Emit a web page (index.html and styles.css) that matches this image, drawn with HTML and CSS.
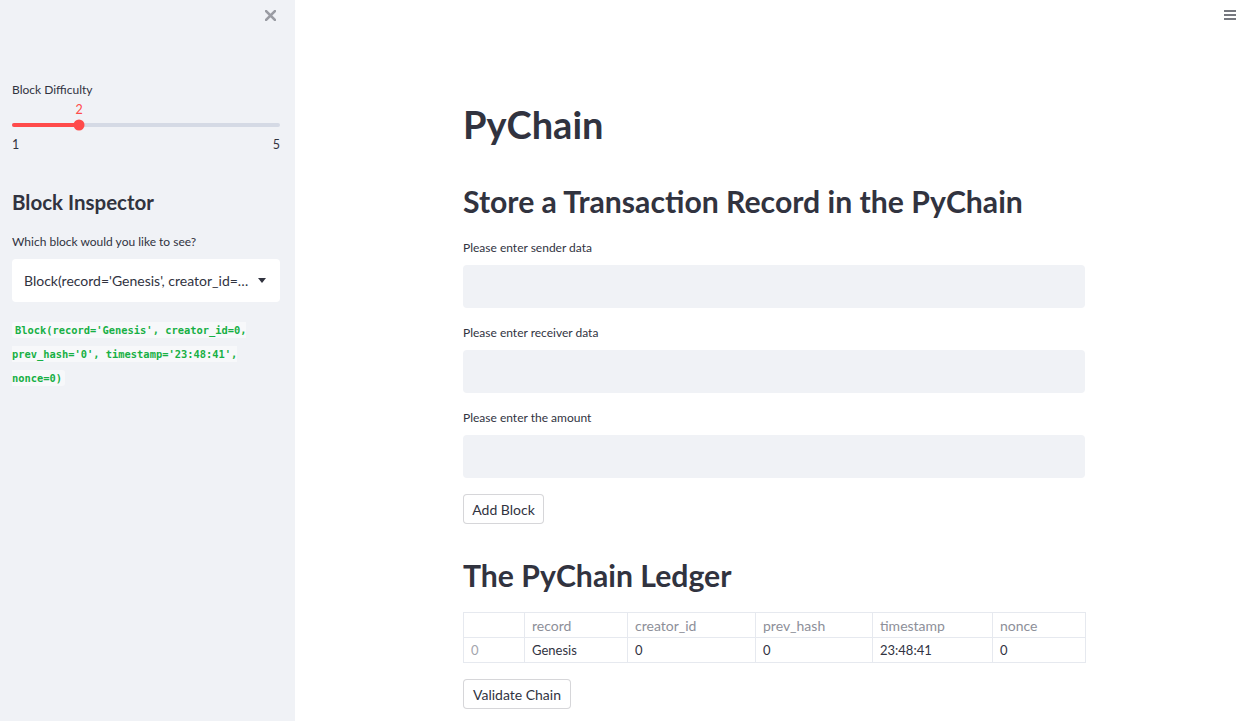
FILE: index.html
```html
<!DOCTYPE html>
<html lang="en">
<head>
<meta charset="utf-8">
<title>PyChain</title>
<link rel="stylesheet" href="styles.css">
</head>
<body>
<div class="app">
  <aside class="sidebar">
    <div class="sb-top">
      <svg class="close-icon" viewBox="0 0 10 10" width="11" height="11"><path d="M1 1 L9 9 M9 1 L1 9" stroke="#9a9ca3" stroke-width="2.4" stroke-linecap="round"/></svg>
    </div>
    <div class="widget-label slider-label">Block Difficulty</div>
    <div class="slider">
      <div class="slider-track">
        <div class="slider-fill" style="width:25%"></div>
        <div class="slider-thumb" style="left:25%"><span class="slider-value">2</span></div>
      </div>
    </div>
    <div class="slider-minmax"><span>1</span><span>5</span></div>
    <h2 class="sb-heading">Block Inspector</h2>
    <div class="widget-label">Which block would you like to see?</div>
    <div class="select">
      <span class="select-text">Block(record='Genesis', creator_id=…</span>
      <svg class="caret" viewBox="0 0 8 5" width="8" height="5"><path d="M0 0 L8 0 L4 5 Z" fill="#31333f"/></svg>
    </div>
    <div class="code-out"><code>Block(record='Genesis', creator_id=0, prev_hash='0', timestamp='23:48:41', nonce=0)</code></div>
  </aside>
  <main class="main">
    <header class="topbar">
      <svg class="menu-icon" viewBox="0 0 12 10" width="12" height="10"><path d="M0 1 H12 M0 5 H12 M0 9 H12" stroke="#4a4c55" stroke-width="1.5"/></svg>
    </header>
    <div class="block-container">
      <h1 class="title">PyChain</h1>
      <h2 class="heading first-heading">Store a Transaction Record in the PyChain</h2>
      <div class="widget-label field-label first-label">Please enter sender data</div>
      <div class="text-input"></div>
      <div class="widget-label field-label">Please enter receiver data</div>
      <div class="text-input"></div>
      <div class="widget-label field-label">Please enter the amount</div>
      <div class="text-input"></div>
      <button class="btn btn-add">Add Block</button>
      <h2 class="heading ledger-heading">The PyChain Ledger</h2>
      <table class="ledger">
        <colgroup>
          <col class="c-idx"><col class="c-record"><col class="c-creator"><col class="c-prev"><col class="c-ts"><col class="c-nonce">
        </colgroup>
        <thead>
          <tr><th></th><th>record</th><th>creator_id</th><th>prev_hash</th><th>timestamp</th><th>nonce</th></tr>
        </thead>
        <tbody>
          <tr><td class="idx">0</td><td>Genesis</td><td>0</td><td>0</td><td>23:48:41</td><td>0</td></tr>
        </tbody>
      </table>
      <button class="btn btn-validate">Validate Chain</button>
    </div>
  </main>
</div>
</body>
</html>
```

FILE: styles.css
```css
* { box-sizing: border-box; }
html, body { margin: 0; padding: 0; }
body {
  font-family: Lato, "Liberation Sans", sans-serif;
  color: #31333f;
  background: #ffffff;
}
.app {
  display: flex;
  height: 100vh;
  overflow: hidden;
}

/* Sidebar */
.sidebar {
  flex: 0 0 295px;
  width: 295px;
  background: #f0f2f6;
  padding: 0 15px 0 12px;
}
.sb-top {
  height: 30px;
  display: flex;
  justify-content: flex-end;
  align-items: center;
  padding-right: 4px;
}
.widget-label {
  font-size: 12px;
  line-height: 16px;
  color: #31333f;
}
.slider-label { margin-top: 52px; }
.slider {
  padding-top: 25px;
  padding-bottom: 10px;
}
.slider-track {
  position: relative;
  height: 4px;
  border-radius: 2px;
  background: #d5dae5;
}
.slider-fill {
  height: 4px;
  border-radius: 2px;
  background: #ff4b4b;
}
.slider-thumb {
  position: absolute;
  top: 50%;
  width: 11px;
  height: 11px;
  border-radius: 50%;
  background: #ff4b4b;
  transform: translate(-50%, -50%);
}
.slider-value {
  position: absolute;
  left: 50%;
  bottom: 100%;
  margin-bottom: 3px;
  transform: translateX(-50%);
  font-size: 12.5px;
  line-height: 14px;
  color: #ff4b4b;
}
.slider-minmax {
  display: flex;
  justify-content: space-between;
  font-size: 12.5px;
  line-height: 16px;
}
.sb-heading {
  margin: 35px 0 0;
  font-size: 20.5px;
  line-height: 28px;
  font-weight: 700;
}
.sb-heading + .widget-label { margin-top: 18px; }
.select {
  margin-top: 9px;
  height: 43px;
  background: #ffffff;
  border-radius: 4px;
  display: flex;
  align-items: center;
  justify-content: space-between;
  padding: 0 14px 0 12px;
}
.select-text {
  white-space: nowrap;
  font-size: 14px;
}
.caret { flex: none; }
.code-out {
  margin-top: 15px;
  line-height: 22px;
}
.code-out code {
  font-family: "DejaVu Sans Mono", "Liberation Mono", monospace;
  font-size: 10.4px;
  font-weight: 600;
  color: #17b045;
  background: #f7f8fa;
  padding: 2px 3px;
  border-radius: 3px;
}

/* Main */
.main {
  flex: 1;
  padding-left: 5px;
  display: flex;
  flex-direction: column;
}
.topbar {
  height: 30px;
  display: flex;
  justify-content: flex-end;
  align-items: flex-start;
  padding: 10px 12px 0 0;
}
.block-container {
  width: 622px;
  margin: 0 auto;
  padding-top: 70px;
}
.title {
  margin: 0;
  font-size: 38px;
  line-height: 48px;
  font-weight: 700;
}
.heading {
  margin: 0;
  font-size: 30.2px;
  line-height: 40px;
  font-weight: 700;
}
.first-heading { margin-top: 33px; }
.field-label { margin-top: 17px; }
.field-label.first-label { margin-top: 19px; }
.text-input {
  margin-top: 9px;
  height: 43px;
  background: #f0f2f6;
  border-radius: 4px;
}
.btn {
  display: block;
  font-family: inherit;
  font-size: 14px;
  color: #31333f;
  background: #ffffff;
  border: 1px solid rgba(49, 51, 63, 0.2);
  border-radius: 4px;
  height: 30px;
  padding: 0;
  white-space: nowrap;
  text-align: center;
}
.btn-add { margin-top: 16px; width: 81px; }
.ledger-heading { margin-top: 31px; }
.ledger {
  margin-top: 17px;
  width: 622px;
  border-collapse: collapse;
  table-layout: fixed;
  font-size: 13px;
}
.c-idx { width: 61px; }
.c-record { width: 103px; }
.c-creator { width: 128px; }
.c-prev { width: 117px; }
.c-ts { width: 120px; }
.c-nonce { width: 93px; }
.ledger th, .ledger td {
  border: 1px solid #e6e9ef;
  height: 25px;
  padding: 0 7px;
  text-align: left;
  white-space: nowrap;
}
.ledger th {
  font-weight: 400;
  font-size: 14px;
  color: #8d8f99;
}
.ledger td.idx { color: #a3a5ad; }
.btn-validate { margin-top: 16px; width: 108px; }
```
